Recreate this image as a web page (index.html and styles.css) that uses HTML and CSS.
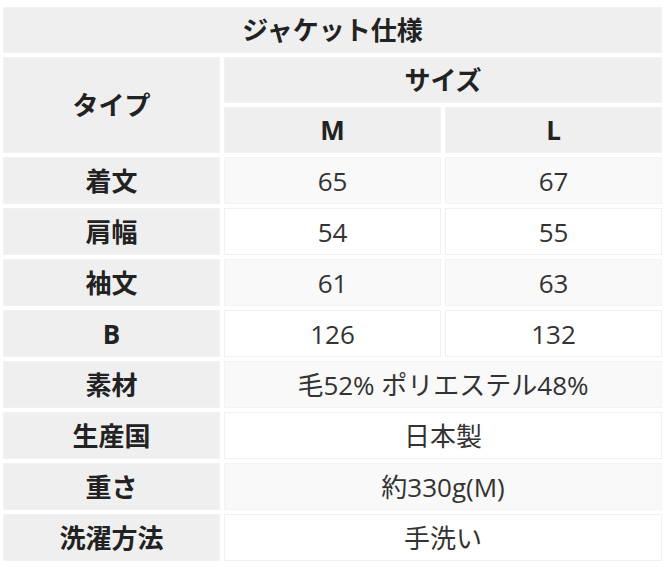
FILE: index.html
```html
<!DOCTYPE html>
<html lang="ja">
<head>
<meta charset="utf-8">
<link rel="stylesheet" href="styles.css">
</head>
<body>
<table class="spec">
  <thead>
    <tr class="hrow"><th class="hd" colspan="3">ジャケット仕様</th></tr>
    <tr class="hrow"><th class="hd" rowspan="2">タイプ</th><th class="hd" colspan="2">サイズ</th></tr>
    <tr class="hrow"><th class="hd">M</th><th class="hd">L</th></tr>
  </thead>
  <tbody>
    <tr class="odd"><th class="hd">着文</th><td>65</td><td>67</td></tr>
    <tr class="even"><th class="hd">肩幅</th><td>54</td><td>55</td></tr>
    <tr class="odd"><th class="hd">袖文</th><td>61</td><td>63</td></tr>
    <tr class="even"><th class="hd">B</th><td>126</td><td>132</td></tr>
    <tr class="odd"><th class="hd">素材</th><td colspan="2">毛52% ポリエステル48%</td></tr>
    <tr class="even"><th class="hd">生産国</th><td colspan="2">日本製</td></tr>
    <tr class="odd"><th class="hd">重さ</th><td colspan="2">約330g(M)</td></tr>
    <tr class="even"><th class="hd">洗濯方法</th><td colspan="2">手洗い</td></tr>
  </tbody>
</table>
</body>
</html>
```
FILE: styles.css
```css
html, body {
  margin: 0;
  padding: 0;
  background: #fff;
}
body {
  font-family: "Open Sans", "Noto Sans CJK JP", sans-serif;
  color: #333;
}
.spec {
  margin: 3px 0 0 -1px;
  width: 667px;
  border-collapse: separate;
  border-spacing: 4px;
  table-layout: fixed;
}
.spec th, .spec td {
  padding: 0;
  text-align: center;
  vertical-align: middle;
  font-size: 26px;
  line-height: 30px;
  border: 1px solid #f2f2f2;
}
.hrow th {
  height: 44px;
}
tbody th, tbody td {
  height: 45px;
}
.hd {
  background: #efefef;
  font-weight: 700;
  color: #222;
  border-color: #f1f1f1;
}
.odd td {
  background: #f9f9f9;
  border-color: #f3f3f3;
}
.even td {
  background: #fff;
  border-color: #f0f0f0;
}
```
